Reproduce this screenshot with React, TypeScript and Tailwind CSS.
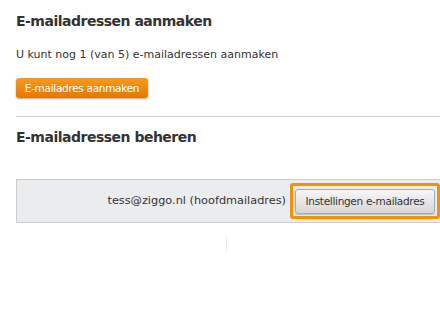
import React from 'react';

export default function App() {
  return (
    <div className="w-[440px] h-[320px] overflow-hidden bg-white font-['DejaVu_Sans',sans-serif] text-[#333]">
      <div className="pl-4 pt-[11px]">
        {/* Aanmaken */}
        <h2 className="text-[14px] font-bold leading-5 tracking-[-0.5px]">E-mailadressen aanmaken</h2>
        <p className="mt-4 text-[11px] leading-4">U kunt nog 1 (van 5) e-mailadressen aanmaken</p>
        <button className="mt-[15px] h-5 w-[132px] rounded-[3px] bg-gradient-to-b from-[#f79a1e] to-[#e27800] text-[10.5px] leading-5 tracking-[-0.3px] text-white shadow-[0_1px_2px_rgba(0,0,0,0.35)]">
          E-mailadres aanmaken
        </button>

        <div className="mt-[17px] border-t border-[#cfcfcf]" />

        {/* Beheren */}
        <h2 className="mt-[10px] text-[14px] font-bold leading-5 tracking-[-0.5px]">E-mailadressen beheren</h2>

        <div className="mt-8 flex h-[44px] items-center justify-end border border-r-0 border-[#cdcdcd] bg-[#ebecee]">
          <span className="mr-1 text-[11.3px] text-[#333]">tess@ziggo.nl (hoofdmailadres)</span>
          <div className="rounded-[3px] border-[3px] border-[#f39200] p-[2px]">
            <button className="h-[25px] w-[140px] rounded-[3px] border border-[#a9a9a9] bg-gradient-to-b from-[#f7f7f7] to-[#d6d6d6] text-[10.5px] tracking-[-0.3px] text-[#333] shadow-[0_1px_1px_rgba(0,0,0,0.2)]">
              Instellingen e-mailadres
            </button>
          </div>
        </div>

        <div className="ml-[210px] mt-[13px] h-4 w-px bg-[#ececec]" />
      </div>
    </div>
  );
}
